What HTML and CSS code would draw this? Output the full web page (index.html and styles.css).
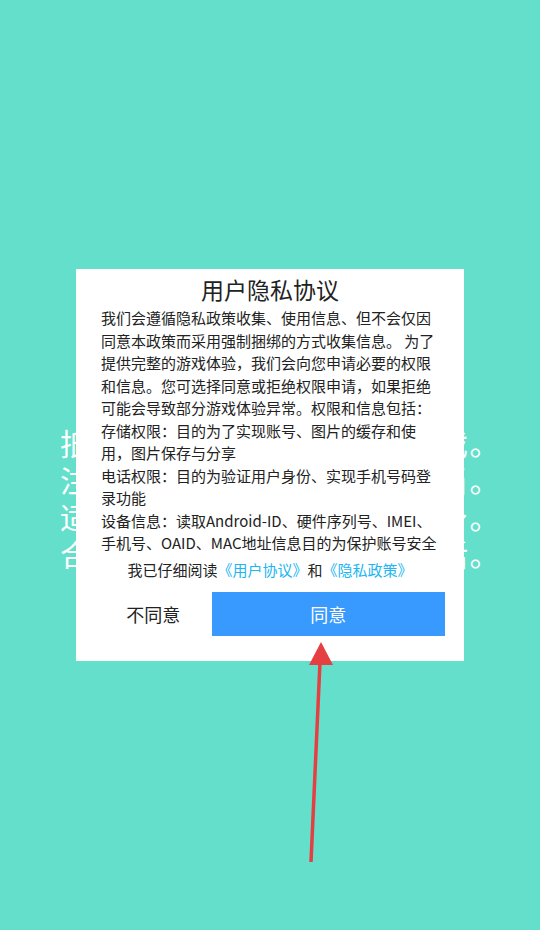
FILE: index.html
```html
<!DOCTYPE html>
<html lang="zh-CN">
<head>
    <meta charset="UTF-8">
    <meta name="viewport" content="width=device-width, initial-scale=1.0">
    <title>用户隐私协议</title>
    <link rel="stylesheet" href="styles.css">
</head>
<body>

    <!-- Health advice behind the dialog -->
    <div class="advice">
        <p>抵制不良游戏，拒绝盗版游戏。</p>
        <p>注意自我保护，谨防受骗上当。</p>
        <p>适度游戏益脑，沉迷游戏伤身。</p>
        <p>合理安排时间，享受健康生活。</p>
    </div>

    <!-- Privacy dialog -->
    <div class="overlay">
        <div class="dialog">
            <h2 class="dialog-title">用户隐私协议</h2>
            <div class="dialog-body">
                <p>我们会遵循隐私政策收集、使用信息、但不会仅因同意本政策而采用强制捆绑的方式收集信息。 为了提供完整的游戏体验，我们会向您申请必要的权限和信息。您可选择同意或拒绝权限申请，如果拒绝可能会导致部分游戏体验异常。权限和信息包括：</p>
                <p>存储权限：目的为了实现账号、图片的缓存和使用，图片保存与分享</p>
                <p>电话权限：目的为验证用户身份、实现手机号码登录功能</p>
                <p>设备信息：读取Android-ID、硬件序列号、IMEI、手机号、OAID、MAC地址信息目的为保护账号安全</p>
            </div>
            <div class="consent">我已仔细阅读<a href="#">《用户协议》</a>和<a href="#">《隐私政策》</a></div>
            <div class="actions">
                <button class="btn-cancel">不同意</button>
                <button class="btn-ok">同意</button>
            </div>
        </div>
    </div>

    <svg class="arrow" width="540" height="930" viewBox="0 0 540 930">
        <line x1="311" y1="862" x2="320" y2="662" stroke="#e63f42" stroke-width="3.5"/>
        <polygon points="321,642 309,665 333,665" fill="#e63f42"/>
    </svg>

</body>
</html>
```

FILE: styles.css
```css
body {
    margin: 0;
    padding: 0;
    height: 930px;
    overflow: hidden;
    background-color: #63dfcb;
    font-family: "Noto Sans CJK SC", "Noto Sans", sans-serif;
}

/* Background advice text */
.advice {
    padding: 424px 0 0 60px;
    color: #fff;
    font-size: 30px;
    line-height: 37px;
    letter-spacing: 1.5px;
}

.advice p {
    margin: 0;
}

/* Dialog */
.overlay {
    position: absolute;
    top: 0;
    left: 0;
    width: 540px;
    height: 930px;
    display: flex;
    align-items: center;
    justify-content: center;
}

.dialog {
    background: white;
    width: 388px;
    box-sizing: border-box;
    padding: 5px 25px 25px;
    color: #222;
}

.dialog-title {
    margin: 0;
    font-size: 23px;
    font-weight: normal;
    line-height: 30px;
    text-align: center;
}

.dialog-body {
    margin-top: 3px;
    font-size: 15px;
    line-height: 22.5px;
}

.dialog-body p {
    margin: 0;
}

.consent {
    margin-top: 4px;
    font-size: 15px;
    line-height: 22px;
    text-align: center;
}

.consent a {
    color: #20b6f2;
    text-decoration: none;
}

.actions {
    display: flex;
    margin: 11px -6px 0;
}

.actions button {
    border: none;
    height: 44px;
    font-family: inherit;
    font-size: 18px;
    padding: 0;
}

.btn-cancel {
    flex: 1;
    background: white;
    color: #222;
}

.btn-ok {
    flex: 2;
    background: #3899ff;
    color: white;
}

.arrow {
    position: absolute;
    top: 0;
    left: 0;
}
```
